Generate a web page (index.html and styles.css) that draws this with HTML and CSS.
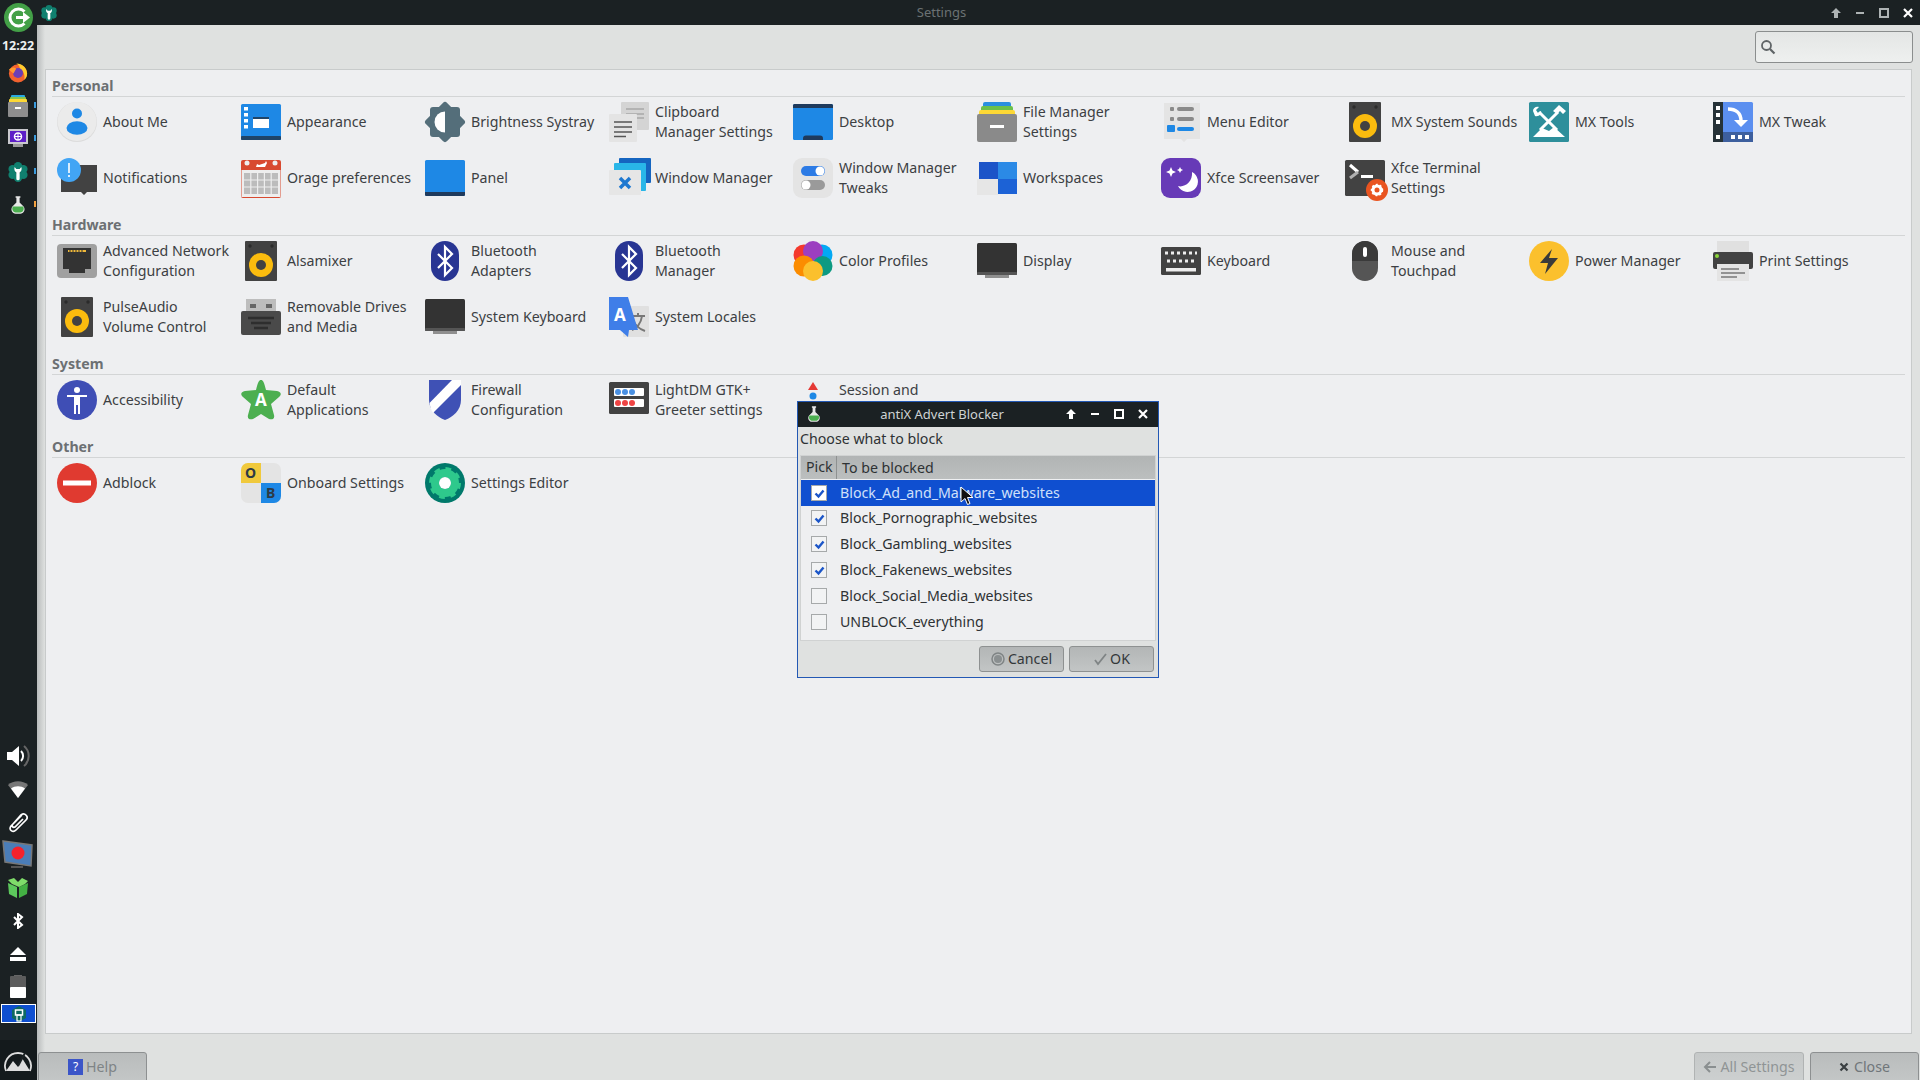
FILE: index.html
```html
<!DOCTYPE html>
<html lang="en">
<head>
<meta charset="utf-8">
<title>Settings</title>
<link rel="stylesheet" href="styles.css">
</head>
<body>
<svg class="defs" width="0" height="0">
  <symbol id="speaker" viewBox="0 0 40 40"><rect x="4" y="0" width="32" height="40" rx="1" fill="#424242"/><circle cx="9" cy="5" r="1.700" fill="#2b2b2b"/><circle cx="31" cy="5" r="1.700" fill="#2b2b2b"/><circle cx="20" cy="24" r="12" fill="#fbbc0e"/><circle cx="20" cy="24" r="5" fill="#424242"/></symbol>
  <symbol id="bt" viewBox="0 0 40 40"><rect x="6" y="0" width="28" height="40" rx="14" fill="#283593"/><path d="M13 13 27 27 20 34V6L27 13 13 27" fill="none" stroke="#fff" stroke-width="2.200"/></symbol>
  <symbol id="monitor" viewBox="0 0 40 40"><rect x="8" y="32" width="24" height="5" fill="#8f8f8f"/><rect x="0" y="2" width="40" height="32" rx="1.500" fill="#333"/><rect x="0" y="31" width="40" height="3" rx="1" fill="#555"/></symbol>
  <symbol id="flask" viewBox="0 0 20 24"><path d="M7 1h6v2h-1v6l5 5c3 4 0 9-4 9H7c-4 0-7-5-4-9l5-5V3H7z" fill="#e8e8e8"/><path d="M3.500 14h13c2 4-1 7.500-3.500 7.500H7C4.500 21.500 1.500 18 3.500 14z" fill="#4caf50"/></symbol>
  <symbol id="wrenchflower" viewBox="0 0 24 24"><circle cx="12" cy="5" r="5" fill="#10806f"/><circle cx="12" cy="19" r="5" fill="#10806f"/><circle cx="5.500" cy="8.500" r="5" fill="#10806f"/><circle cx="18.500" cy="8.500" r="5" fill="#10806f"/><circle cx="5.500" cy="15.500" r="5" fill="#10806f"/><circle cx="18.500" cy="15.500" r="5" fill="#10806f"/><path d="M8 6c-1 3 0 5 2 6.500V20a2 2 0 0 0 4 0v-7.500c2-1.500 3-3.500 2-6.500l-2 2.500h-4z" fill="#fff"/></symbol>
</svg>

<aside class="sidebar">
  <div class="side-top">
    <div class="logout">
      <svg width="29" height="29" viewBox="0 0 29 29"><circle cx="14.500" cy="14.500" r="14.500" fill="#43a047"/><path d="M20.500 8.500a8.500 8.500 0 1 0 0 12" fill="none" stroke="#fff" stroke-width="3"/><path d="M12 13h7V9l7 5.500-7 5.500v-4h-7z" fill="#fff"/></svg>
    </div>
    <div class="clock">12:22</div>
    <div class="launcher">
      <svg width="20" height="21" viewBox="0 0 22 22"><circle cx="11" cy="12" r="10" fill="#f2622e"/><path d="M9 1c7 0 12 5 12 11 0 3-1 5-3 7 1-5-1-10-5-12 0-3-2-5-4-6z" fill="#ffcb2e"/><circle cx="11" cy="11.500" r="5.500" fill="#6b3fb5"/><path d="M1 8c3-3 6-3 8-1l-3 5z" fill="#ff9a2e"/></svg>
    </div>
    <div class="launcher has-mark">
      <svg width="20" height="22" viewBox="0 0 20 22"><rect x="3" y="0" width="14" height="5" rx="1" fill="#29a9e0"/><rect x="2" y="2" width="16" height="5" rx="1" fill="#8bc34a"/><rect x="1" y="4" width="18" height="5" rx="1" fill="#fdd835"/><rect x="0" y="7" width="20" height="15" rx="1" fill="#8e8e8e"/><rect x="7" y="12" width="6" height="2" fill="#fff"/></svg>
    </div>
    <div class="launcher has-mark">
      <svg width="20" height="20" viewBox="0 0 20 20"><rect x="0" y="0" width="20" height="15" fill="#c9c9ce"/><rect x="2" y="2" width="16" height="11" fill="#5d1fc7"/><circle cx="10" cy="7.500" r="3.500" fill="none" stroke="#fff" stroke-width="1.500"/><path d="M10 4v7M6.500 7.500h7" stroke="#fff"/><rect x="5" y="15" width="10" height="3" fill="#9a9a9a"/></svg>
    </div>
    <div class="launcher has-mark">
      <svg width="20" height="20"><use href="#wrenchflower"/></svg>
    </div>
    <div class="launcher has-mark mark-orange">
      <svg width="16" height="20"><use href="#flask"/></svg>
    </div>
  </div>

  <div class="side-bottom">
    <div class="tray">
      <svg width="24" height="24" viewBox="0 0 24 24"><path d="M1 8h5l7-6v20l-7-6H1z" fill="#fff"/><path d="M15 7a7 7 0 0 1 0 10" fill="none" stroke="#fff" stroke-width="2"/><path d="M18 2a13 13 0 0 1 0 20" fill="none" stroke="#666" stroke-width="2"/></svg>
    </div>
    <div class="tray">
      <svg width="20" height="18" viewBox="0 0 20 18"><path d="M0 5c5-5 15-5 20 0l-10 13z" fill="#777"/><path d="M3 8.500c4-3 10-3 14 0l-7 9.500z" fill="#fff"/></svg>
    </div>
    <div class="tray">
      <svg width="20" height="22" viewBox="0 0 20 22"><path d="M14 4 3 15c-3 4 2 7 5 4L18 9c3-3-1-8-5-5L5 13c-2 2 0 4 2 3l8-8" fill="none" stroke="#fff" stroke-width="1.700"/></svg>
    </div>
    <div class="tray">
      <svg width="32" height="30" viewBox="0 0 32 30"><path d="M1 1l29 4-1 21-26-4z" fill="#4a7db8"/><path d="M1 1l29 4-1 21-26-4z" fill="none" stroke="#777" stroke-width="1.500"/><circle cx="16" cy="13" r="6.500" fill="#f5222d"/><rect x="9" y="26" width="12" height="2" fill="#555"/></svg>
    </div>
    <div class="tray">
      <svg width="22" height="22" viewBox="0 0 22 22"><path d="M1 6l9 4v11L2 17z" fill="#5cc85c"/><path d="M21 6l-9 4v11l8-4z" fill="#43b043"/><path d="M1 3l6-2 4 4 4-4 6 3-3 3-6 3-7-3z" fill="#7fdc6a"/></svg>
    </div>
    <div class="tray">
      <svg width="12" height="16" viewBox="0 0 12 16"><path d="M2 4l8 8-4 3V1l4 3-8 8" fill="none" stroke="#fff" stroke-width="2"/></svg>
    </div>
    <div class="tray">
      <svg width="16" height="14" viewBox="0 0 16 14"><path d="M8 0l8 8H0z" fill="#fff"/><rect y="10" width="16" height="4" fill="#fff"/></svg>
    </div>
    <div class="tray">
      <svg width="16" height="23" viewBox="0 0 16 23"><rect x="4" y="0" width="8" height="2" fill="#666"/><rect y="1" width="16" height="22" rx="1" fill="#5c5c5c"/><rect y="12" width="16" height="11" rx="1" fill="#fff"/></svg>
    </div>
    <div class="tray-active">
      <svg width="14" height="16" viewBox="0 0 14 16"><path d="M7 0l7 4v8l-7 4-7-4V4z" fill="#0e6a60"/><rect x="3.500" y="4" width="7" height="5" fill="none" stroke="#fff" stroke-width="1.500"/><rect x="5" y="9" width="4" height="6" fill="none" stroke="#fff" stroke-width="1.200"/></svg>
    </div>
    <div class="menu-btn">
      <svg width="30" height="30" viewBox="0 0 30 30"><path d="M3 26a13 13 0 1 1 24 0" fill="none" stroke="#ddd" stroke-width="1.800"/><path d="M3 26l7-10 5 6 4-9 8 13z" fill="#ddd"/><path d="M22 8 15 21" stroke="#1b2123" stroke-width="2"/></svg>
    </div>
  </div>
</aside>

<main class="window">
  <header class="titlebar">
    <svg class="title-icon" width="16" height="16"><use href="#wrenchflower"/></svg>
    <span class="title-text">Settings</span>
    <div class="wm-buttons">
      <svg class="wm-dim" width="12" height="12" viewBox="0 0 12 12"><path d="M6 1l5 5H8v5H4V6H1z" fill="currentColor"/></svg>
      <svg class="wm-dim" width="12" height="12" viewBox="0 0 12 12"><rect x="2" y="5" width="8" height="2" fill="currentColor"/></svg>
      <svg class="wm-dim" width="12" height="12" viewBox="0 0 12 12"><rect x="2" y="2" width="8" height="8" fill="none" stroke="currentColor" stroke-width="2"/></svg>
      <svg class="wm-bright" width="12" height="12" viewBox="0 0 12 12"><path d="M2 2l8 8M10 2l-8 8" stroke="currentColor" stroke-width="2.200"/></svg>
    </div>
  </header>

  <div class="toolbar">
    <div class="search">
      <svg width="16" height="16" viewBox="0 0 16 16"><circle cx="6.500" cy="6.500" r="4.500" fill="none" stroke="#5f6466" stroke-width="1.800"/><path d="M10 10l4.500 4.500" stroke="#5f6466" stroke-width="2.200"/></svg>
    </div>
  </div>

  <div class="panel">
    <section class="group">
      <h2 class="group-title">Personal</h2>
      <div class="grid">
        <div class="item"><svg class="icon" viewBox="0 0 40 40"><circle cx="20" cy="20" r="20" fill="#dcdcdc"/><circle cx="20" cy="19.500" r="19.500" fill="#ebebeb"/><circle cx="20" cy="11.500" r="5" fill="#1e88e5"/><ellipse cx="20" cy="26" rx="10.500" ry="6.800" fill="#1e88e5"/></svg><span class="label">About Me</span></div>
        <div class="item"><svg class="icon" viewBox="0 0 40 40"><rect y="2" width="40" height="36" rx="1.500" fill="#1e88e5"/><rect y="34" width="40" height="4" rx="1" fill="#1f4468"/><rect x="3" y="5" width="4" height="3.500" fill="#fff"/><rect x="3" y="11" width="4" height="3.500" fill="#fff"/><rect x="3" y="17" width="4" height="3.500" fill="#fff"/><rect x="3" y="23" width="4" height="3.500" fill="#fff"/><rect x="12" y="15" width="16" height="11" fill="#fff"/><rect x="12" y="15" width="16" height="2" fill="#1f4468"/></svg><span class="label">Appearance</span></div>
        <div class="item"><svg class="icon" viewBox="0 0 40 40"><rect x="5" y="5" width="30" height="30" rx="3" fill="#546e7a"/><rect x="5" y="5" width="30" height="30" rx="3" fill="#546e7a" transform="rotate(45 20 20)"/><path d="M20 9.500a10.500 10.500 0 0 0 0 21z" fill="#fff"/></svg><span class="label">Brightness Systray</span></div>
        <div class="item"><svg class="icon" viewBox="0 0 40 40"><rect x="12" y="0" width="28" height="28" rx="1" fill="#d4d4d4"/><path d="M17 7h18M17 12h18M28 16h7" stroke="#a8a8a8" stroke-width="1.500"/><rect x="0" y="12" width="28" height="28" rx="1" fill="#e4e4e4"/><path d="M5 20h18M5 25h18M5 30h18M5 34.500h12" stroke="#555" stroke-width="1.500"/></svg><span class="label">Clipboard<br>Manager Settings</span></div>
        <div class="item"><svg class="icon" viewBox="0 0 40 40"><rect y="2" width="40" height="36" rx="1.500" fill="#1e88e5"/><path d="M0 3.500A1.500 1.500 0 0 1 1.500 2h37A1.500 1.500 0 0 1 40 3.500V6H0z" fill="#1f3a5c"/><path d="M10 38v-1.500a3 3 0 0 1 3-3h14a3 3 0 0 1 3 3V38z" fill="#1f3a5c"/></svg><span class="label">Desktop</span></div>
        <div class="item"><svg class="icon" viewBox="0 0 40 40"><rect x="6" y="0" width="28" height="10" rx="2" fill="#2a8fe0"/><rect x="4" y="4" width="32" height="10" rx="2" fill="#6cc04a"/><rect x="2" y="8" width="36" height="10" rx="2" fill="#fdd835"/><rect y="12" width="40" height="28" rx="2" fill="#8a8a8a"/><rect x="13" y="23" width="14" height="3" fill="#fff"/></svg><span class="label">File Manager<br>Settings</span></div>
        <div class="item"><svg class="icon" viewBox="0 0 40 40"><path d="M3 1h36v36H26l-3 3-3-3H3z" fill="#e4e4e4"/><rect x="9" y="5" width="4" height="4" rx="1" fill="#8a8a8a"/><rect x="16" y="5" width="17" height="4" rx="2" fill="#8a8a8a"/><rect x="9" y="15" width="4" height="4" rx="1" fill="#8a8a8a"/><rect x="16" y="15" width="17" height="4" rx="2" fill="#8a8a8a"/><rect x="6" y="23" width="8" height="7" rx="1" fill="#1e88e5"/><rect x="16" y="25" width="17" height="4" rx="2" fill="#1e88e5"/></svg><span class="label">Menu Editor</span></div>
        <div class="item"><svg class="icon"><use href="#speaker"/></svg><span class="label">MX System Sounds</span></div>
        <div class="item"><svg class="icon" viewBox="0 0 40 40"><rect width="40" height="40" rx="1.500" fill="#2e8f9b"/><path d="M4 35l9-9 7 3 5-4 11 10z" fill="#fff"/><path d="M10 10l18 18" stroke="#fff" stroke-width="3"/><path d="M29 10 11 28" stroke="#fff" stroke-width="3"/><path d="M4 9c0-3 3-5 6-4L7 8l2 3 3-2c1 3-2 6-6 5z" fill="#fff"/><path d="M24 9l6-6 7 6-3 3-3-3-3 3z" fill="#fff"/></svg><span class="label">MX Tools</span></div>
        <div class="item"><svg class="icon" viewBox="0 0 40 40"><rect width="40" height="40" rx="1.500" fill="#5b8ff0"/><rect y="30" width="40" height="10" fill="#3d5f9e"/><rect width="10" height="40" fill="#263238"/><rect x="3" y="4" width="4" height="4" fill="#fff"/><rect x="3" y="11" width="4" height="4" fill="#fff"/><rect x="3" y="18" width="4" height="4" fill="#fff"/><rect x="3" y="33" width="4" height="4" fill="#fff"/><rect x="18" y="33" width="4" height="4" fill="#fff"/><rect x="25" y="33" width="4" height="4" fill="#fff"/><rect x="32" y="33" width="4" height="4" fill="#fff"/><path d="M15 7c8 0 13 4 13 12" fill="none" stroke="#fff" stroke-width="3.500"/><path d="M21 18h14l-7 7z" fill="#fff"/></svg><span class="label">MX Tweak</span></div>

        <div class="item"><svg class="icon" viewBox="0 0 40 40"><path d="M4 7h36v27H30l-3 3-3-3H4z" fill="#424242"/><circle cx="12" cy="12" r="12" fill="#42a5f5"/><rect x="11.200" y="5" width="1.600" height="10" fill="#fff"/><rect x="11.200" y="17" width="1.600" height="2" fill="#fff"/></svg><span class="label">Notifications</span></div>
        <div class="item"><svg class="icon" viewBox="0 0 40 40"><rect y="2" width="40" height="38" rx="2" fill="#d84a30"/><rect x="0.500" y="12" width="39" height="27" fill="#eeeeee"/><circle cx="6" cy="5" r="2.500" fill="#eee"/><circle cx="34" cy="5" r="2.500" fill="#eee"/><path d="M15 9l1-3 2 1 6-2 1-2 1 2-2 4z" fill="#fff"/><path d="M3 15h34v21H3z" fill="#bcbcbc"/><path d="M9.800 15v21M16.600 15v21M23.400 15v21M30.200 15v21M3 22h34M3 29h34" stroke="#eee" stroke-width="1.200"/></svg><span class="label">Orage preferences</span></div>
        <div class="item"><svg class="icon" viewBox="0 0 40 40"><rect y="2" width="40" height="36" rx="1.500" fill="#1e88e5"/><path d="M0 34h40v2.500a1.500 1.500 0 0 1-1.500 1.500h-37A1.500 1.500 0 0 1 0 36.500z" fill="#1f3a5c"/></svg><span class="label">Panel</span></div>
        <div class="item"><svg class="icon" viewBox="0 0 40 40"><rect x="10" y="0" width="32" height="25" rx="1" fill="#1565c0"/><rect x="5" y="5" width="32" height="28" rx="1" fill="#29b6e8"/><rect y="12" width="32" height="25" rx="1" fill="#e6e6e6"/><path d="M11 20l10 10M21 20 11 30" stroke="#1e78d0" stroke-width="3.500"/></svg><span class="label">Window Manager</span></div>
        <div class="item"><svg class="icon" viewBox="0 0 40 40"><rect width="40" height="40" rx="9" fill="#e4e4e4"/><rect x="8" y="8" width="24" height="10" rx="5" fill="#2c7be5"/><circle cx="27" cy="13" r="4.500" fill="#fff"/><rect x="8" y="22" width="24" height="10" rx="5" fill="#9a9a9a"/><circle cx="13" cy="27" r="4.500" fill="#fff"/></svg><span class="label">Window Manager<br>Tweaks</span></div>
        <div class="item"><svg class="icon" viewBox="0 0 40 40"><rect x="2" y="4" width="19" height="17" fill="#1c54c8"/><rect x="0" y="21" width="21" height="16" fill="#e6e6e6"/><rect x="21" y="4" width="19" height="17" fill="#2b8ae6"/><rect x="21" y="21" width="19" height="15" fill="#1c62d6"/></svg><span class="label">Workspaces</span></div>
        <div class="item"><svg class="icon" viewBox="0 0 40 40"><rect width="40" height="40" rx="9" fill="#673ab7"/><path d="M31 14a10.500 10.500 0 1 1-14 14c6 2 15-4 14-14z" fill="#fff"/><path d="M10 9l1.500 3.500L15 14l-3.500 1.500L10 19l-1.500-3.500L5 14l3.500-1.500zM19 9l1 2 2 1-2 1-1 2-1-2-2-1 2-1z" fill="#fff"/></svg><span class="label">Xfce Screensaver</span></div>
        <div class="item"><svg class="icon" viewBox="0 0 40 40"><rect y="2" width="40" height="36" rx="1.500" fill="#424242"/><path d="M5 7l8 7" stroke="#fff" stroke-width="3"/><path d="M13 14l-8 6" stroke="#b0b0b0" stroke-width="3"/><rect x="16" y="17" width="12" height="3" fill="#fff"/><circle cx="32" cy="32" r="11" fill="#e95420"/><circle cx="32" cy="32" r="4" fill="none" stroke="#fff" stroke-width="3"/><circle cx="32" cy="32" r="5.500" fill="none" stroke="#fff" stroke-width="1.500" stroke-dasharray="2 2"/></svg><span class="label">Xfce Terminal<br>Settings</span></div>
      </div>
    </section>

    <section class="group">
      <h2 class="group-title">Hardware</h2>
      <div class="grid">
        <div class="item"><svg class="icon" viewBox="0 0 40 40"><rect y="3" width="40" height="34" rx="4" fill="#a0a0a0"/><path d="M6 7h28v21h-6v4H12v-4H6z" fill="#333"/><path d="M11 9h18v2H11z" fill="#f0b93a"/><path d="M13 9v2M16 9v2M19 9v2M22 9v2M25 9v2" stroke="#333"/></svg><span class="label">Advanced Network<br>Configuration</span></div>
        <div class="item"><svg class="icon"><use href="#speaker"/></svg><span class="label">Alsamixer</span></div>
        <div class="item"><svg class="icon"><use href="#bt"/></svg><span class="label">Bluetooth<br>Adapters</span></div>
        <div class="item"><svg class="icon"><use href="#bt"/></svg><span class="label">Bluetooth<br>Manager</span></div>
        <div class="item"><svg class="icon" viewBox="0 0 40 40"><circle cx="11" cy="14" r="10.500" fill="#f4392d"/><circle cx="29" cy="14" r="10.500" fill="#03a9f4"/><circle cx="20" cy="10" r="10" fill="#9c3fc0"/><circle cx="29.500" cy="25" r="10" fill="#0d9a82"/><circle cx="11" cy="25" r="10.500" fill="#fb8c00"/><circle cx="20" cy="30" r="10" fill="#fbc02d"/></svg><span class="label">Color Profiles</span></div>
        <div class="item"><svg class="icon"><use href="#monitor"/></svg><span class="label">Display</span></div>
        <div class="item"><svg class="icon" viewBox="0 0 40 40"><rect y="6" width="40" height="28" rx="1.500" fill="#424242"/><path d="M4 12h32M6 20h28" stroke="#eee" stroke-width="3" stroke-dasharray="3 3"/><rect x="5" y="27" width="30" height="3.500" fill="#eee"/></svg><span class="label">Keyboard</span></div>
        <div class="item"><svg class="icon" viewBox="0 0 40 40"><rect x="7" y="0" width="26" height="40" rx="13" fill="#555"/><path d="M7 20v-7a13 13 0 0 1 26 0v7z" fill="#3a3a3a"/><rect x="18" y="6" width="4" height="10" rx="2" fill="#fff"/></svg><span class="label">Mouse and<br>Touchpad</span></div>
        <div class="item"><svg class="icon" viewBox="0 0 40 40"><circle cx="20" cy="20" r="20" fill="#fbc02d"/><path d="M23 8 11 22h8l-3 11 13-16h-9z" fill="#3a3a3a"/></svg><span class="label">Power Manager</span></div>
        <div class="item"><svg class="icon" viewBox="0 0 40 40"><rect x="4" y="0" width="32" height="12" fill="#e0e0e0"/><rect y="11" width="40" height="17" rx="2" fill="#424242"/><circle cx="4" cy="15" r="2" fill="#8bd63a"/><rect x="4" y="23" width="32" height="17" fill="#e4e4e4"/><path d="M8 28h18M8 32h24M8 36h16" stroke="#777" stroke-width="1.500"/></svg><span class="label">Print Settings</span></div>

        <div class="item"><svg class="icon"><use href="#speaker"/></svg><span class="label">PulseAudio<br>Volume Control</span></div>
        <div class="item"><svg class="icon" viewBox="0 0 40 40"><rect x="5" y="2" width="30" height="14" fill="#bdbdbd"/><rect x="9" y="7" width="6" height="4" fill="#666"/><rect x="25" y="7" width="6" height="4" fill="#666"/><rect y="14" width="40" height="24" rx="2" fill="#4a4a4a"/><path d="M7 21h26M10 26h20M13 31h14" stroke="#2e2e2e" stroke-width="2.500"/></svg><span class="label">Removable Drives<br>and Media</span></div>
        <div class="item"><svg class="icon"><use href="#monitor"/></svg><span class="label">System Keyboard</span></div>
        <div class="item"><svg class="icon" viewBox="0 0 40 40"><rect x="14" y="9" width="26" height="31" rx="1" fill="#e0e0e0"/><path d="M22 19h14M29 16v3M33 19c-1 8-6 13-10 14M24 23c2 5 6 9 12 11" fill="none" stroke="#777" stroke-width="2"/><path d="M0 0h19l10 33H20l-1 7-8-7H0z" fill="#3f7ee8"/><text class="badge-a" x="5" y="24">A</text></svg><span class="label">System Locales</span></div>
      </div>
    </section>

    <section class="group">
      <h2 class="group-title">System</h2>
      <div class="grid">
        <div class="item"><svg class="icon" viewBox="0 0 40 40"><circle cx="20" cy="20" r="20" fill="#3f4eb5"/><circle cx="20" cy="10" r="3" fill="#fff"/><path d="M10 15h20v2h-7v17h-2v-9h-2v9h-2V17h-7z" fill="#fff"/></svg><span class="label">Accessibility</span></div>
        <div class="item"><svg class="icon" viewBox="0 0 40 40"><path d="M20 0c2 0 3 2 5 10l11 1c4 1 5 3 2 6l-8 7 3 11c1 4-2 5-5 4l-8-5-8 5c-3 1-6 0-5-4l3-11-8-7c-3-3-2-5 2-6l11-1c2-8 3-10 5-10z" fill="#4caf50"/><text class="badge-star" x="14" y="26">A</text></svg><span class="label">Default<br>Applications</span></div>
        <div class="item"><svg class="icon" viewBox="0 0 40 40"><path d="M4 0h32v20c0 10-8 17-16 20C12 37 4 30 4 20z" fill="#3f51b5"/><path d="M27 0h9v5L8 33q-3-4-3.500-10z" fill="#fff"/></svg><span class="label">Firewall<br>Configuration</span></div>
        <div class="item"><svg class="icon" viewBox="0 0 40 40"><rect y="2" width="40" height="32" rx="1.500" fill="#424242"/><rect x="5" y="8" width="30" height="8" rx="1" fill="#fff"/><rect x="5" y="19" width="30" height="8" rx="1" fill="#fff"/><circle cx="9" cy="12" r="3" fill="#4a90e2"/><circle cx="16" cy="12" r="3" fill="#4a90e2"/><circle cx="23" cy="12" r="3" fill="#4a90e2"/><circle cx="9" cy="23" r="3" fill="#ef4444"/><circle cx="16" cy="23" r="3" fill="#ef4444"/><circle cx="23" cy="23" r="3" fill="#ef4444"/></svg><span class="label">LightDM GTK+<br>Greeter settings</span></div>
        <div class="item"><svg class="icon" viewBox="0 0 40 40"><path d="M20 2l5 8H15z" fill="#e53935"/><circle cx="20" cy="16" r="3.500" fill="#1e88e5"/></svg><span class="label label-covered">Session and</span></div>
      </div>
    </section>

    <section class="group">
      <h2 class="group-title">Other</h2>
      <div class="grid">
        <div class="item"><svg class="icon" viewBox="0 0 40 40"><circle cx="20" cy="20" r="20" fill="#e03a30"/><rect x="6" y="17.500" width="28" height="5" fill="#fff"/></svg><span class="label">Adblock</span></div>
        <div class="item"><svg class="icon" viewBox="0 0 40 40"><rect width="40" height="40" rx="7" fill="#e4e4e4"/><path d="M7 0h13v20H0V7a7 7 0 0 1 7-7z" fill="#f0c93c"/><path d="M20 20h20v13a7 7 0 0 1-7 7H20z" fill="#1e88e5"/><text class="badge-ob" x="4" y="15">O</text><text class="badge-ob" x="25" y="35">B</text></svg><span class="label">Onboard Settings</span></div>
        <div class="item"><svg class="icon" viewBox="0 0 40 40"><circle cx="20" cy="20" r="20" fill="#00796b"/><circle cx="20" cy="20" r="10" fill="none" stroke="#2ec98c" stroke-width="8"/><circle cx="20" cy="20" r="14" fill="none" stroke="#2ec98c" stroke-width="4" stroke-dasharray="5.500 5.500"/><circle cx="20" cy="20" r="6" fill="#fff"/></svg><span class="label">Settings Editor</span></div>
      </div>
    </section>
  </div>

  <footer class="footer">
    <button class="btn btn-help"><span class="help-mark">?</span>Help</button>
    <div class="footer-right">
      <button class="btn btn-all"><svg width="14" height="14" viewBox="0 0 14 14"><path d="M7 2 2 7l5 5M2 7h11" fill="none" stroke="#8a8f90" stroke-width="2"/></svg>All Settings</button>
      <button class="btn btn-close"><svg width="10" height="10" viewBox="0 0 10 10"><path d="M1.500 1.500l7 7M8.500 1.500l-7 7" stroke="#3a3f41" stroke-width="2.200"/></svg>Close</button>
    </div>
  </footer>
</main>

<div class="dialog">
  <header class="dlg-title">
    <svg class="dlg-icon" width="14" height="18"><use href="#flask"/></svg>
    <span class="dlg-title-text">antiX Advert Blocker</span>
    <div class="dlg-wm">
      <svg width="12" height="12" viewBox="0 0 12 12"><path d="M6 1l5 5H8v5H4V6H1z" fill="#fff"/></svg>
      <svg width="12" height="12" viewBox="0 0 12 12"><rect x="2" y="5" width="8" height="2" fill="#fff"/></svg>
      <svg width="12" height="12" viewBox="0 0 12 12"><rect x="2" y="2" width="8" height="8" fill="none" stroke="#fff" stroke-width="2"/></svg>
      <svg width="12" height="12" viewBox="0 0 12 12"><path d="M2 2l8 8M10 2l-8 8" stroke="#fff" stroke-width="2.200"/></svg>
    </div>
  </header>
  <p class="dlg-prompt">Choose what to block</p>
  <div class="list">
    <div class="list-head"><span class="col-pick">Pick</span><span class="col-name">To be blocked</span></div>
    <div class="row selected"><span class="check on"><svg width="13" height="13" viewBox="0 0 13 13"><path d="M2.500 6.500l3 3 5-6" fill="none" stroke="#1b55c8" stroke-width="2.400"/></svg></span>Block_Ad_and_Malware_websites</div>
    <div class="row"><span class="check on"><svg width="13" height="13" viewBox="0 0 13 13"><path d="M2.500 6.500l3 3 5-6" fill="none" stroke="#1b55c8" stroke-width="2.400"/></svg></span>Block_Pornographic_websites</div>
    <div class="row"><span class="check on"><svg width="13" height="13" viewBox="0 0 13 13"><path d="M2.500 6.500l3 3 5-6" fill="none" stroke="#1b55c8" stroke-width="2.400"/></svg></span>Block_Gambling_websites</div>
    <div class="row"><span class="check on"><svg width="13" height="13" viewBox="0 0 13 13"><path d="M2.500 6.500l3 3 5-6" fill="none" stroke="#1b55c8" stroke-width="2.400"/></svg></span>Block_Fakenews_websites</div>
    <div class="row"><span class="check"></span>Block_Social_Media_websites</div>
    <div class="row"><span class="check"></span>UNBLOCK_everything</div>
  </div>
  <div class="dlg-actions">
    <button class="dlg-btn"><svg width="14" height="14" viewBox="0 0 14 14"><circle cx="7" cy="7" r="6" fill="none" stroke="#7f8485" stroke-width="1.500"/><circle cx="7" cy="7" r="4" fill="#8a8f90"/></svg>Cancel</button>
    <button class="dlg-btn"><svg width="14" height="14" viewBox="0 0 14 14"><path d="M2 8l3 4 8-10" fill="none" stroke="#7f8485" stroke-width="1.800"/></svg>OK</button>
  </div>
</div>

<svg class="cursor" width="14" height="20" viewBox="0 0 14 20"><path d="M1 1v15l4-3.500 2.500 6 2.500-1-2.500-6H13z" fill="#111" stroke="#fff" stroke-width="1"/></svg>
</body>
</html>
```

FILE: styles.css
```css
* { box-sizing: border-box; }
html, body { margin: 0; height: 1080px; overflow: hidden; }
body {
  display: flex;
  font-family: "Noto Sans", "Open Sans", sans-serif;
  font-size: 14.200px;
  color: #3c4043;
  background: #dfe1e0;
}
.defs { position: absolute; }

/* left panel */
.sidebar {
  width: 37px;
  flex: none;
  height: 1080px;
  background: #1b2123;
  display: flex;
  flex-direction: column;
  justify-content: space-between;
  color: #fff;
}
.logout { height: 32px; padding-top: 3px; display: flex; justify-content: center; margin-left: -1px; }
.logout svg, .launcher svg, .tray svg { display: block; }
.clock {
  height: 24px;
  line-height: 28px;
  text-align: center;
  font-size: 12.500px;
  font-weight: 700;
  color: #eef0f0;
  margin-left: -1px;
}
.launcher {
  height: 33px;
  display: flex;
  align-items: center;
  justify-content: center;
  position: relative;
  padding-right: 2px;
}
.has-mark::after {
  content: "";
  position: absolute;
  right: 1px;
  top: 13px;
  width: 2px;
  height: 6px;
  background: #3b9bdc;
}
.mark-orange::after { background: #f0a040; }
.tray {
  height: 33px;
  display: flex;
  align-items: center;
  justify-content: center;
  padding-right: 2px;
}
.tray-active {
  height: 19px;
  margin: 1px 1px 17px;
  border: 1px solid #fff;
  background: #0f4fd0;
  display: flex;
  align-items: center;
  justify-content: center;
}
.menu-btn {
  height: 40px;
  background: #141a1c;
  display: flex;
  align-items: center;
  justify-content: center;
  padding-right: 2px;
}

/* main window */
.window {
  flex: 1;
  min-width: 0;
  height: 1080px;
  display: flex;
  flex-direction: column;
  background: linear-gradient(to right, #b9bcbc 0, #dfe1e0 8px);
}
.titlebar {
  height: 25px;
  flex: none;
  background: #1b2123;
  display: flex;
  align-items: center;
  padding-left: 4px;
  position: relative;
}
.title-icon { display: block; }
.title-text {
  position: absolute;
  left: 0;
  top: 2px;
  width: 1809px;
  text-align: center;
  font-size: 13px;
  line-height: 20px;
  color: #6b7173;
}
.wm-buttons {
  margin-left: auto;
  display: flex;
  gap: 12px;
  padding-right: 6px;
}
.wm-dim { color: #aeb3b4; }
.wm-bright { color: #fff; }
.toolbar {
  height: 44px;
  flex: none;
  display: flex;
  justify-content: flex-end;
  align-items: flex-start;
  padding: 6px 7px 0 0;
}
.search {
  width: 158px;
  height: 32px;
  border: 1px solid #8b8e8e;
  border-radius: 3px;
  background: linear-gradient(#e4e6e5, #eef0ef);
  display: flex;
  align-items: center;
  padding-left: 4px;
}
.panel {
  flex: none;
  height: 965px;
  margin: 0 8px 0 8px;
  border: 1px solid #c8cbcb;
  background: #eeeff1;
  padding: 5px 6px 0;
}
.group { margin-bottom: 13px; }
.group-title {
  margin: 0 0 2px;
  height: 22px;
  line-height: 21px;
  font-size: 14.200px;
  font-weight: 700;
  color: #6c7073;
  border-bottom: 1px solid #d3d5d6;
}
.grid {
  display: grid;
  grid-template-columns: repeat(10, 184px);
  grid-auto-rows: 46px;
  row-gap: 10px;
}
.item {
  display: flex;
  align-items: center;
  gap: 6px;
  padding-left: 5px;
  line-height: 20px;
  white-space: nowrap;
}
.icon { width: 40px; height: 40px; flex: none; display: block; overflow: visible; }
.label { display: block; padding-bottom: 1px; }
.label-covered { padding-bottom: 21px; }
.badge-a { font: 700 17px "Noto Sans", sans-serif; fill: #fff; }
.badge-star { font: 700 17px "Noto Sans", sans-serif; fill: #fff; }
.badge-ob { font: 700 14px "Noto Sans", sans-serif; fill: #2d3a46; }

/* bottom buttons */
.footer {
  flex: 1;
  display: flex;
  justify-content: space-between;
  align-items: flex-start;
  padding: 18px 1px 0 0;
}
.footer-right { display: flex; gap: 6px; }
.btn {
  height: 32px;
  border-radius: 3px;
  border: 1px solid #8d9091;
  background: linear-gradient(#b9bcbc, #c4c7c7);
  font: 14.200px "Noto Sans", sans-serif;
  color: #7e8486;
  padding: 0 0 3px;
  display: flex;
  align-items: center;
  justify-content: center;
  gap: 3px;
}
.btn-help { width: 109px; margin-left: 1px; color: #7e8486; }
.help-mark {
  width: 15px;
  height: 16px;
  background: #3b55c8;
  color: #fff;
  font-size: 12px;
  line-height: 16px;
  text-align: center;
}
.btn-all {
  width: 110px;
  background: linear-gradient(#c6c9c9, #cdd0d0);
  border-color: #b0b3b3;
  color: #8f9495;
}
.btn-close { width: 109px; gap: 5px; color: #70767a; }

/* dialog window */
.dialog {
  position: absolute;
  left: 797px;
  top: 401px;
  width: 362px;
  height: 277px;
  border: 1px solid #2358b4;
  background: #dfe1e0;
  display: flex;
  flex-direction: column;
}
.dlg-title {
  height: 25px;
  flex: none;
  background: #1b2123;
  display: flex;
  align-items: center;
  position: relative;
  padding: 0 0 1px 9px;
}
.dlg-title-text {
  position: absolute;
  left: 0;
  width: 288px;
  text-align: center;
  font-size: 13px;
  color: #cfd3d4;
}
.dlg-wm { margin-left: auto; display: flex; gap: 12px; padding-right: 9px; }
.dlg-wm svg { display: block; }
.dlg-icon { display: block; }
.dlg-prompt {
  margin: 0;
  height: 28px;
  line-height: 24px;
  padding-left: 2px;
  color: #2e3234;
}
.list {
  margin: 0 2px;
  height: 186px;
  flex: none;
  border: 1px solid #d0d2d2;
  background: #eeeff1;
}
.list-head {
  height: 23px;
  display: flex;
  align-items: center;
  background: linear-gradient(#b1b4b4, #bcbfbf);
  color: #2e3234;
  line-height: 21px;
}
.col-pick { width: 36px; padding-left: 5px; border-right: 1px solid #8e9191; height: 23px; }
.col-name { padding-left: 5px; }
.row {
  height: 26px;
  display: flex;
  align-items: center;
  color: #2e3234;
  padding-left: 10px;
  line-height: 24px;
}
.list-head + .row { margin-top: 1px; margin-bottom: -1px; }
.selected { background: #0f4fd0; color: #cfe0fa; }
.check {
  width: 16px;
  height: 16px;
  flex: none;
  border: 1px solid #a6a9aa;
  background: #f2f3f4;
  margin-right: 13px;
  display: flex;
  align-items: center;
  justify-content: center;
}
.selected .check { background: #fff; }
.dlg-actions {
  display: flex;
  justify-content: flex-end;
  gap: 5px;
  padding: 5px 4px 0 0;
}
.dlg-btn {
  width: 85px;
  height: 26px;
  padding: 0 0 1px;
  border: 1px solid #8e9191;
  border-radius: 3px;
  background: linear-gradient(#b3b6b6, #c2c5c5);
  font: 14.200px "Noto Sans", sans-serif;
  color: #34383a;
  display: flex;
  align-items: center;
  justify-content: center;
  gap: 3px;
}
.cursor { position: absolute; left: 960px; top: 486px; }
```
